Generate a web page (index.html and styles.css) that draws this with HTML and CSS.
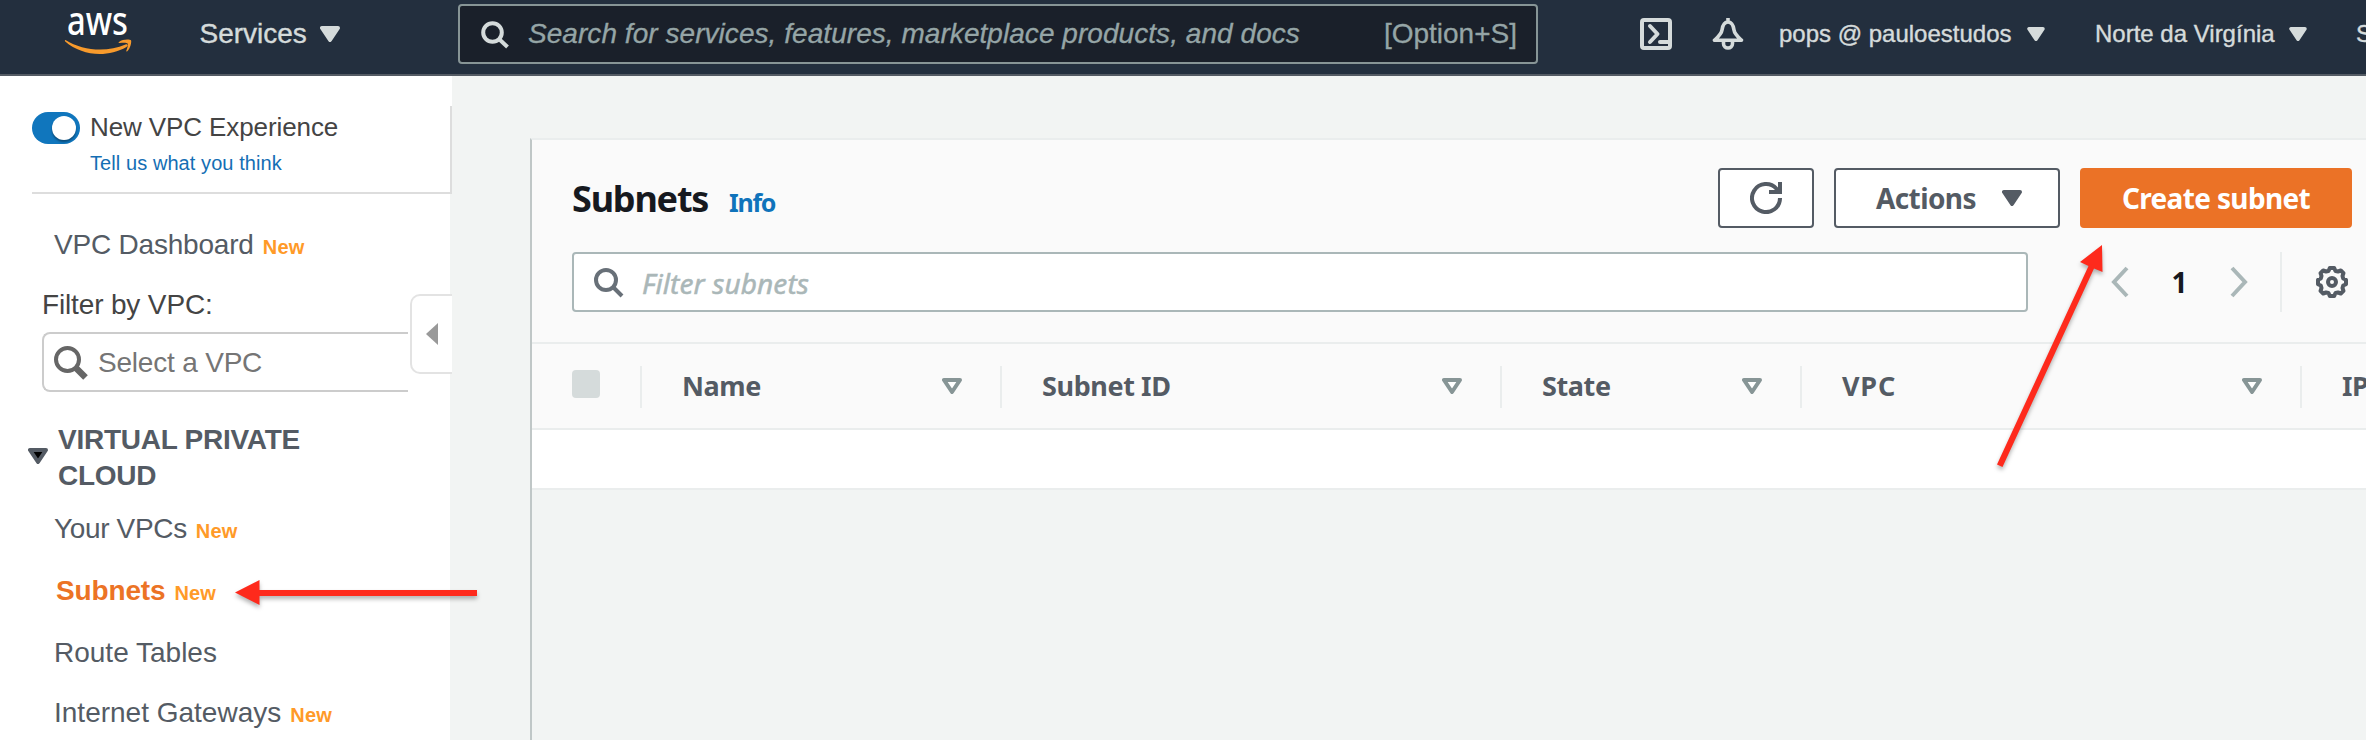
FILE: index.html
```html
<!DOCTYPE html>
<html lang="en">
<head>
<meta charset="utf-8">
<title>Subnets | VPC Management Console</title>
<link rel="stylesheet" href="styles.css">
</head>
<body>
<header class="topbar">
  <svg class="logo" width="68" height="44" viewBox="0 0 68 44">
    <text class="logo-text" x="2" y="22.500" textLength="61" lengthAdjust="spacingAndGlyphs">aws</text>
    <path fill="#f79a2c" d="M0.500 28C18 39 42 40.500 60.500 32.500C62.500 31.700 63.500 33.500 61.500 35C42 46 17 44 0.200 29.600C-.5 28.800 0 27.700 .5 28ZM54 30C58 26.500 65.500 27.300 66 28.300C66.800 29.500 65.500 36.500 62.300 39.300C61.600 39.800 61 39.500 61.300 38.700C62.500 36 63.300 32.500 62.600 31.500C61.800 30.500 58 30.700 54.500 31C53.500 31 53.300 30.500 54 30Z"/>
  </svg>
  <a class="services">Services <svg width="20" height="16" viewBox="0 0 20 16"><path class="caret" d="M2 2H18L10 14Z"/></svg></a>
  <div class="search">
    <svg width="29" height="28" viewBox="0 0 29 28" fill="none" stroke="#d5dbdb" stroke-width="4"><circle cx="11.500" cy="11.500" r="9.300"/><path d="M18 18L26.500 26"/></svg>
    <span class="search-hint">Search for services, features, marketplace products, and docs</span>
    <span class="search-key">[Option+S]</span>
  </div>
  <svg class="shell" width="32" height="32" viewBox="0 0 32 32" fill="none" stroke="#d5dbdb" stroke-width="4" stroke-linejoin="round"><rect x="2" y="2" width="28" height="28" rx="2"/><path stroke-linecap="round" d="M10 8L17.500 16L10 24M20 24H28"/></svg>
  <svg class="bell" width="32" height="32" viewBox="0 0 32 32" fill="none" stroke="#d5dbdb" stroke-width="3.600" stroke-linejoin="round"><path d="M16 4C11.500 4 10.500 8.500 10 12C9.500 16 6 19 2.500 22.200H29.500C26 19 22.500 16 22 12C21.500 8.500 20.500 4 16 4ZM16 0V4"/><path d="M11.500 23V25.500C11.500 31.500 20.500 31.500 20.500 25.500V23"/></svg>
  <a class="account">pops @ pauloestudos</a>
  <svg class="account-caret" width="18" height="14" viewBox="0 0 20 16"><path class="caret" d="M2 2H18L10 14Z"/></svg>
  <a class="region">Norte da Virgínia</a>
  <svg class="region-caret" width="18" height="14" viewBox="0 0 20 16"><path class="caret" d="M2 2H18L10 14Z"/></svg>
  <a class="support">S</a>
</header>
<div class="shell-body">
  <nav class="sidebar">
    <section class="experience">
      <div class="toggle"><i></i></div>
      <div>
        <div class="exp-title">New VPC Experience</div>
        <a class="exp-link">Tell us what you think</a>
      </div>
    </section>
    <a class="item dashboard">VPC Dashboard<b class="new">New</b></a>
    <div class="filter-label">Filter by VPC:</div>
    <div class="vpc-select">
      <svg width="34" height="34" viewBox="0 0 34 34" fill="none" stroke="#666"><circle cx="13.500" cy="13.500" r="11.500" stroke-width="4"/><path stroke-width="6.500" d="M21.500 21.500L31.500 31.500"/></svg>
      <span>Select a VPC</span>
    </div>
    <div class="group">
      <svg width="20" height="16" viewBox="0 0 20 16"><path d="M2 2H18L10 14Z" fill="#000" stroke="#545b64" stroke-width="4" stroke-linejoin="round"/></svg>
      <h2>VIRTUAL PRIVATE<br>CLOUD</h2>
    </div>
    <a class="item vpcs">Your VPCs<b class="new">New</b></a>
    <a class="item active">Subnets<b class="new">New</b></a>
    <a class="item routes">Route Tables</a>
    <a class="item gateways">Internet Gateways<b class="new">New</b></a>
    <button class="collapse" aria-label="Collapse"><svg width="12" height="22" viewBox="0 0 12 22"><path d="M0 11L12 0V22Z" fill="#999"/></svg></button>
  </nav>
  <main class="content">
    <section class="panel">
      <div class="panel-head">
        <div class="title-row">
          <h1>Subnets</h1><a class="info">Info</a>
          <div class="buttons">
            <button class="btn refresh" aria-label="Refresh"><svg width="32" height="32" viewBox="0 0 32 32" fill="none" stroke="#545b64" stroke-width="4"><path d="M30 16A14 14 0 1 1 26.500 6.800L29 10M30 0V10H19"/></svg></button>
            <button class="btn actions"><span>Actions</span><svg width="20" height="16" viewBox="0 0 20 16"><path d="M2 2H18L10 14Z" fill="#545b64" stroke="#545b64" stroke-width="4" stroke-linejoin="round"/></svg></button>
            <button class="btn primary"><span>Create subnet</span></button>
          </div>
        </div>
        <div class="filter-row">
          <div class="filter">
            <svg width="30" height="30" viewBox="0 0 30 30" fill="none" stroke="#687078" stroke-width="4"><circle cx="12" cy="12" r="10"/><path d="M19 19L28 28"/></svg>
            <span>Filter subnets</span>
          </div>
          <div class="pager">
            <svg width="18" height="32" viewBox="0 0 18 32" fill="none" stroke="#aab7b8" stroke-width="4"><path d="M16 2L3 16L16 30"/></svg>
            <b>1</b>
            <svg width="18" height="32" viewBox="0 0 18 32" fill="none" stroke="#aab7b8" stroke-width="4"><path d="M2 2L15 16L2 30"/></svg>
          </div>
          <div class="settings">
            <svg width="32" height="32" viewBox="0 0 32 32" fill="none" stroke="#545b64" stroke-width="4" stroke-linejoin="round"><path d="M13.800 2H18.200L19.500 5L22 5.500L24.800 4.500L27.500 7.200L26.500 10L27.200 12.500L30 13.800V18.200L27.200 19.500L26.500 22L27.500 24.800L24.800 27.500L22 26.500L19.500 27L18.200 30H13.800L12.500 27L10 26.500L7.200 27.500L4.500 24.800L5.500 22L4.800 19.500L2 18.200V13.800L4.800 12.500L5.500 10L4.500 7.200L7.200 4.500L10 5.500L12.500 5Z"/><circle cx="16" cy="16" r="4"/></svg>
          </div>
        </div>
      </div>
      <div class="thead">
        <div class="check"><i></i></div>
        <div class="th"><span>Name</span><svg width="20" height="16" viewBox="0 0 20 16"><path class="sort" d="M2 2H18L10 14Z"/></svg></div>
        <div class="th"><span>Subnet ID</span><svg width="20" height="16" viewBox="0 0 20 16"><path class="sort" d="M2 2H18L10 14Z"/></svg></div>
        <div class="th"><span>State</span><svg width="20" height="16" viewBox="0 0 20 16"><path class="sort" d="M2 2H18L10 14Z"/></svg></div>
        <div class="th"><span class="wide">VPC</span><svg width="20" height="16" viewBox="0 0 20 16"><path class="sort" d="M2 2H18L10 14Z"/></svg></div>
        <div class="th"><span>IP</span></div>
      </div>
      <div class="empty-row"></div>
    </section>
  </main>
</div>
<svg class="arrows" width="2366" height="740" viewBox="0 0 2366 740" fill="#fe2a1c">
  <path d="M235 592.500L259.500 580V590H477V596H259.500V605Z"/>
  <path d="M2102 245L2102.500 272L2094 268.500L2002.500 467L1997 464.500L2088.500 266L2080 262Z"/>
</svg>
</body>
</html>
```
FILE: styles.css
```css
* { box-sizing: border-box; }
body { margin: 0; width: 2366px; height: 740px; overflow: hidden; background: #f2f4f3; font-family: "Liberation Sans", Arial, sans-serif; position: relative; }
svg { display: block; flex: none; }
button { padding: 0; margin: 0; font: inherit; }

.topbar { height: 76px; display: flex; align-items: flex-start; background: #232f3e; border-bottom: 2px solid #545b64; color: #d5dbdb; white-space: nowrap; overflow: hidden; }
.topbar > * { flex: none; }
.logo { margin: 12px 0 0 65px; overflow: visible; }
.logo-text { font: 500 39px "Noto Sans", sans-serif; fill: #fff; }
.caret { fill: #d5dbdb; stroke: #d5dbdb; stroke-width: 4; stroke-linejoin: round; }
.services { margin: 14px 0 0 66.500px; width: 140.500px; height: 40px; display: flex; justify-content: space-between; font-size: 28px; line-height: 40px; -webkit-text-stroke: .4px; }
.services svg { margin-top: 12px; }
.search { margin: 4px 0 0 118px; width: 1080px; height: 60px; display: flex; align-items: flex-start; padding: 8px 19px 0 21px; border: 2px solid #879596; border-radius: 4px; background: #1a202a; color: #95a5a6; font-size: 28px; line-height: 40px; -webkit-text-stroke: .3px; }
.search svg { margin-top: 7px; }
.search-hint { margin-left: 18px; font-style: italic; letter-spacing: .05px; }
.search-key { margin-left: auto; }
.shell { margin: 18px 0 0 102px; }
.bell { margin: 18px 0 0 40px; }
.account, .region, .support { font-size: 24px; line-height: 40px; margin-top: 14px; -webkit-text-stroke: .4px; }
.account { margin-left: 35px; width: 248px; }
.account-caret, .region-caret { margin-top: 27px; }
.region { margin-left: 50px; width: 194px; }
.support { margin-left: 49px; }

.shell-body { display: flex; height: 664px; }
.sidebar { width: 450px; flex: none; background: #fff; position: relative; color: #545b64; font-size: 28px; }
.experience { width: 452px; height: 118px; background: linear-gradient(#ddd, #ddd) no-repeat 450px 30px / 2px 88px, #fff; padding: 30px 0 0 32px; display: flex; position: relative; }
.experience::after { content: ""; position: absolute; left: 32px; right: 0; bottom: 0; height: 2px; background: #ddd; }
.toggle { width: 48px; height: 32px; border-radius: 16px; background: #1076bd; margin-top: 6px; padding: 4px; }
.toggle i { display: block; width: 24px; height: 24px; margin-left: 16px; border-radius: 50%; background: #fff; box-shadow: 0 2px 2px rgba(0, 0, 0, .35); }
.exp-title { margin-left: 10px; font-size: 26px; line-height: 42px; color: #444; letter-spacing: -.1px; }
.exp-link { display: block; margin-left: 10px; font-size: 20px; line-height: 30px; color: #146eb4; letter-spacing: .08px; }
.item { display: block; padding-left: 54px; line-height: 40px; height: 40px; white-space: nowrap; }
.new { font-size: 20px; color: #ff9a28; margin-left: 9px; letter-spacing: .2px; }
.dashboard { margin-top: 31px; letter-spacing: -.2px; }
.filter-label { margin: 21px 0 0 42px; line-height: 38px; color: #444; letter-spacing: -.15px; }
.vpc-select { margin: 8px 0 0 42px; width: 366px; height: 60px; border: 2px solid #ccc; border-right: 0; border-radius: 8px 0 0 8px; display: flex; padding: 10px; color: #757575; line-height: 40px; letter-spacing: -.2px; }
.vpc-select svg { margin-top: 2px; }
.vpc-select span { margin: -1px 0 0 10px; }
.group { display: flex; margin: 29px 0 0 28px; }
.group svg { margin-top: 27px; }
h2 { margin: 1px 0 -1px 10px; font-size: 28px; line-height: 36px; letter-spacing: -.25px; }
.vpcs { margin-top: 16px; letter-spacing: -.35px; }
.active { margin-top: 22px; padding-left: 56px; font-weight: bold; color: #ec7325; letter-spacing: -.15px; }
.routes { margin-top: 22px; }
.gateways { margin-top: 20px; }
.collapse { position: absolute; left: 410px; top: 218px; width: 42px; height: 80px; border: 2px solid #e3e3e3; border-right: 0; border-radius: 10px 0 0 10px; background: #fff; padding-left: 14px; }

.content { padding: 62px 0 0 80px; width: 1916px; flex: none; font-family: "Noto Sans", "Open Sans", sans-serif; }
.panel { width: 1836px; height: 602px; border-left: 2px solid #c0c7c7; border-top: 2px solid #eaeded; overflow: hidden; }
.panel-head { height: 204px; background: #fafafa; border-bottom: 2px solid #eaeded; padding: 28px 0 0 40px; }
.title-row { display: flex; height: 60px; }
h1 { margin: 6px 0 0; font-size: 36px; line-height: 50px; color: #16191f; letter-spacing: -1.2px; width: 157px; }
.info { margin-top: 14px; font-size: 25px; line-height: 40px; font-weight: bold; color: #0f73bb; letter-spacing: -1.3px; }
.buttons { margin-left: auto; margin-right: 14px; display: flex; gap: 20px; }
.btn { height: 60px; border: 2px solid #545b64; border-radius: 4px; background: #fff; color: #545b64; font-size: 28px; line-height: 40px; font-weight: bold; display: flex; align-items: center; justify-content: center; white-space: nowrap; }
.refresh { width: 96px; }
.actions { width: 226px; padding: 0 36px 0 40px; justify-content: space-between; letter-spacing: -.6px; }
.primary { width: 272px; background: #eb7226; border-color: #eb7226; color: #fff; letter-spacing: -.65px; }
.filter-row { display: flex; margin-top: 24px; }
.filter { width: 1456px; height: 60px; border: 2px solid #aab7b8; border-radius: 4px; background: #fff; display: flex; padding: 8px 20px; font-size: 28px; line-height: 40px; font-style: italic; color: #aab7b8; }
.filter svg { margin-top: 6px; }
.filter span { margin: 1px 0 0 18px; letter-spacing: .1px; -webkit-text-stroke: .5px; }
.pager { display: flex; margin: 0 0 0 83px; padding-top: 14px; width: 137px; justify-content: space-between; font-size: 28px; line-height: 33px; color: #16191f; }
.settings { margin-left: 32px; width: 68px; height: 60px; border-left: 2px solid #eaeded; padding: 14px 0 0 34px; }
.thead { height: 86px; background: #fafafa; border-bottom: 2px solid #eaeded; display: grid; grid-template-columns: 108px 360px 500px 300px 500px 66px; padding-top: 22px; color: #545b64; font-size: 27px; font-weight: bold; }
.check i { display: block; width: 28px; height: 28px; margin: 4px 0 0 40px; background: #d5dbdb; border-radius: 4px; }
.th { height: 42px; border-left: 2px solid #eaeded; padding: 0 38px 0 40px; display: flex; justify-content: space-between; line-height: 40px; white-space: nowrap; letter-spacing: -.4px; }
.th svg { margin-top: 12px; }
.th:last-child { padding-right: 0; }
.wide { letter-spacing: .8px; }
.sort { fill: #fff; stroke: #879596; stroke-width: 4; stroke-linejoin: round; }
.empty-row { height: 60px; background: #fff; border-bottom: 2px solid #eaeded; }

.arrows { position: absolute; left: 0; top: 0; pointer-events: none; filter: drop-shadow(0 3px 2px rgba(0, 0, 0, .3)); }
```
